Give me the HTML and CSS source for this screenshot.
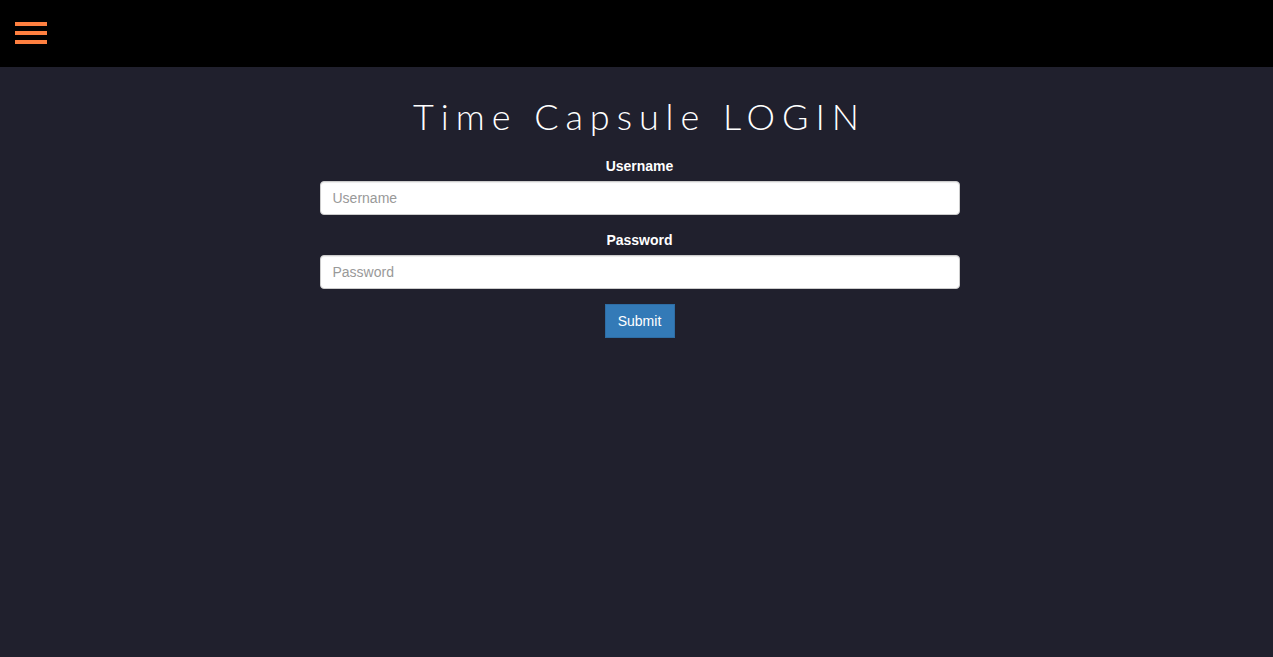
FILE: index.html
```html
<!DOCTYPE html>
<html>
<head>
<meta charset="utf-8">
<title>Time Capsule LOGIN</title>
<link rel="stylesheet" href="styles.css">
</head>
<body>
<header class="topbar">
  <button class="menu-btn" aria-label="Menu">
    <span class="bar"></span><span class="bar"></span><span class="bar"></span>
  </button>
</header>
<main class="content">
  <h1 class="title">Time Capsule LOGIN</h1>
  <form class="login-form">
    <div class="form-group">
      <label class="form-label" for="username">Username</label>
      <input class="form-input" id="username" type="text" placeholder="Username">
    </div>
    <div class="form-group">
      <label class="form-label" for="password">Password</label>
      <input class="form-input" id="password" type="password" placeholder="Password">
    </div>
    <button class="submit-btn" type="submit">Submit</button>
  </form>
</main>
</body>
</html>
```
FILE: styles.css
```css
html, body {
  margin: 0;
  padding: 0;
  height: 100%;
}
body {
  background: #20202d;
  font-family: "Liberation Sans", Arial, sans-serif;
  font-size: 14px;
  line-height: 20px;
  color: #fff;
}
.topbar {
  height: 67px;
  background: #000;
  display: flex;
  align-items: flex-start;
}
.menu-btn {
  margin: 22px 0 0 15px;
  padding: 0;
  border: 0;
  background: none;
  width: 32px;
  display: flex;
  flex-direction: column;
  gap: 5px;
  cursor: pointer;
}
.bar {
  display: block;
  width: 32px;
  height: 4px;
  background: #ff8040;
}
.content {
  display: flex;
  flex-direction: column;
  align-items: center;
  padding-left: 6px;
}
.title {
  font-family: "Lato", sans-serif;
  font-weight: 300;
  font-size: 36px;
  line-height: 40px;
  letter-spacing: 6.95px;
  margin: 29px 0 20px 0;
  color: #fff;
}
.login-form {
  width: 640px;
  display: flex;
  flex-direction: column;
  align-items: center;
}
.form-group {
  width: 100%;
  display: flex;
  flex-direction: column;
  align-items: center;
  margin-bottom: 15px;
}
.form-label {
  font-weight: bold;
  margin-bottom: 5px;
}
.form-input {
  box-sizing: border-box;
  width: 100%;
  height: 34px;
  padding: 6px 12px;
  font-family: "Liberation Sans", Arial, sans-serif;
  font-size: 14px;
  color: #555;
  background: #fff;
  border: 1px solid #ccc;
  border-radius: 4px;
  box-shadow: inset 0 1px 1px rgba(0,0,0,.075);
}
.form-input::placeholder {
  color: #999;
}
.submit-btn {
  box-sizing: border-box;
  width: 70px;
  height: 34px;
  padding: 6px 0;
  font-family: "Liberation Sans", Arial, sans-serif;
  font-size: 14px;
  line-height: 20px;
  color: #fff;
  background: #337ab7;
  border: 1px solid #2e6da4;
  border-radius: 0;
  cursor: pointer;
}
```
